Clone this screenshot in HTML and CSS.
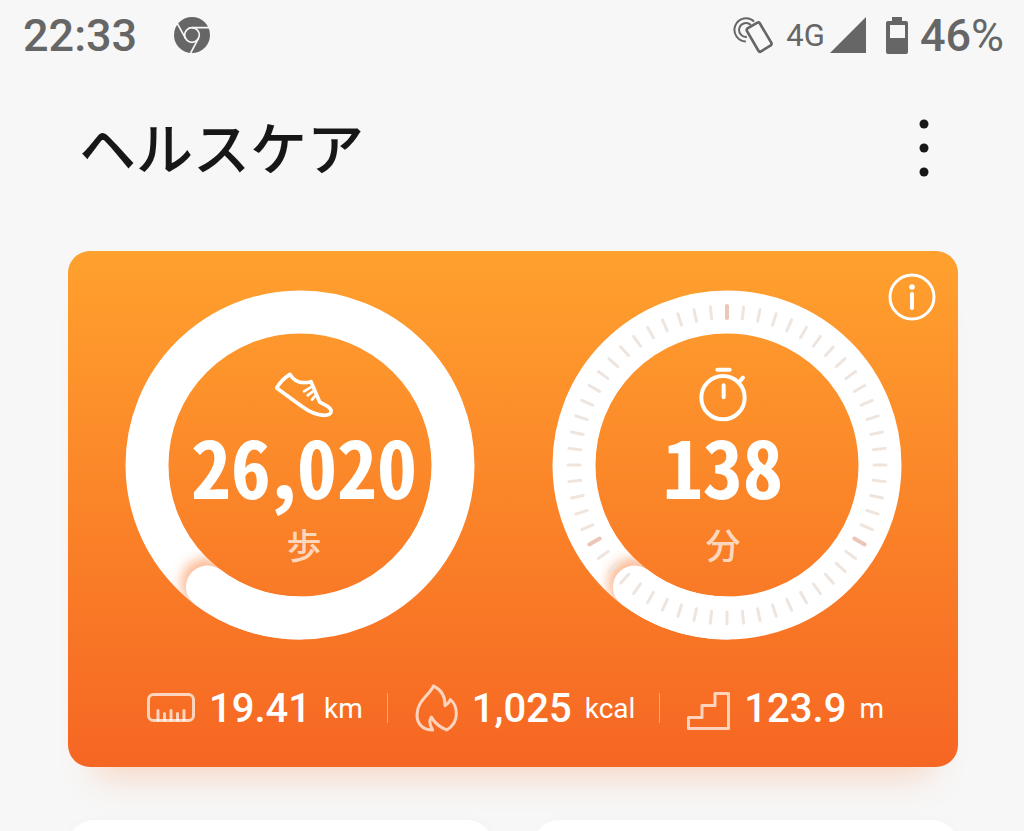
FILE: index.html
```html
<!DOCTYPE html>
<html lang="ja">

<head>
    <meta charset="UTF-8">
    <meta name="viewport" content="width=device-width, initial-scale=1.0">
    <title>ヘルスケア</title>
    <link rel="stylesheet" href="styles.css">
</head>

<body>

    <div class="status-bar">
        <div class="status-left">
            <span class="clock">22:33</span>
            <svg class="chrome" viewBox="0 0 108 108" width="36" height="36">
                <circle cx="54" cy="54" r="54" fill="#666" />
                <g fill="none" stroke="#f7f7f7" stroke-width="5">
                    <circle cx="54" cy="54" r="22" />
                    <path d="M54 32h52M35 65L10 20M73 65L50 108" />
                </g>
            </svg>
        </div>
        <div class="status-right">
            <svg viewBox="104 44 124 116" width="41" height="39" fill="none" stroke="#666" stroke-width="6">
                <path d="M168 60A35 35 0 1 0 143 120M158 70A21 21 0 1 0 146 106" />
                <path d="M149 80L178 63Q182 61 185 65L220 124Q222 129 218 132L189 150Q184 153 181 148L146 88Q144 83 149 80Z" stroke-width="8" />
            </svg>
            <span class="network">4G</span>
            <svg class="signal" viewBox="0 0 36 36" width="36" height="36">
                <path d="M36 0V36H0Z" fill="#666" />
            </svg>
            <svg class="battery" viewBox="0 0 22 37" width="22" height="37">
                <path fill="#666" fill-rule="evenodd" d="M6 0h10v4h4q2 0 2 2v29q0 2-2 2H2q-2 0-2-2V6q0-2 2-2h4ZM4 8v13h15V8Z" />
            </svg>
            <span class="percent">46<span class="sign">%</span></span>
        </div>
    </div>

    <header>
        <h1>ヘルスケア</h1>
        <button type="button" class="menu" aria-label="メニュー">
            <svg viewBox="0 0 10 58" width="10" height="58" fill="#171717">
                <circle cx="5" cy="5" r="4.5" />
                <circle cx="5" cy="29" r="4.5" />
                <circle cx="5" cy="53" r="4.5" />
            </svg>
        </button>
    </header>

    <main>
        <section class="card">
            <button type="button" class="info" aria-label="情報">
                <svg viewBox="0 0 48 48" width="48" height="48" fill="none" stroke="#fff" stroke-width="3">
                    <circle cx="24" cy="24" r="22" />
                    <path d="M24 21V35" stroke-width="4" stroke-linecap="round" />
                    <circle cx="24" cy="14" r="2.8" fill="#fff" stroke="none" />
                </svg>
            </button>

            <div class="rings">
                <div class="ring steps">
                    <svg class="dial" viewBox="0 0 350 350">
                        <defs>
                            <filter id="soft" x="-50%" y="-50%" width="200%" height="200%">
                                <feGaussianBlur stdDeviation="6" />
                            </filter>
                            <clipPath id="band">
                                <path clip-rule="evenodd" d="M175 .5a174.500 174.500 0 1 0 .01 0ZM175 43.500a131.500 131.500 0 1 0 .01 0Z" />
                            </clipPath>
                        </defs>
                        <circle class="track" cx="175" cy="175" r="153" />
                        <g clip-path="url(#band)">
                            <circle cx="81" cy="293" r="25" fill="#fcbb97" filter="url(#soft)" />
                        </g>
                        <path class="head" d="M175 328A153 153 0 0 1 82.500 297" />
                    </svg>
                    <div class="reading">
                        <div class="icon">
                            <svg viewBox="490 275 186 144" width="62" height="48" fill="none" stroke="#fff" stroke-width="11" stroke-linecap="round" stroke-linejoin="round">
                                <path d="M541 288Q514 305 501 329L576 384Q613 411 644 411C667 411 669 396 657 387C645 378 639 377 630 371L604 310Q561 322 541 288Z" />
                                <path d="M603 327L583 339M609 340L594 351M615 354L607 364" stroke-width="8" />
                            </svg>
                        </div>
                        <span class="number">26<span class="comma">,</span>020</span>
                        <span class="label">歩</span>
                    </div>
                </div>

                <div class="ring minutes">
                    <svg class="dial" viewBox="0 0 350 350">
                        <circle class="track" cx="175" cy="175" r="153" />
                        <g clip-path="url(#band)">
                            <circle cx="81" cy="293" r="25" fill="#fcbb97" filter="url(#soft)" />
                        </g>
                        <path class="head" d="M175 328A153 153 0 0 1 82.500 297" />
                        <g id="ticks"></g>
                    </svg>
                    <div class="reading">
                        <div class="icon">
                            <svg viewBox="472 264 156 168" width="52" height="56" fill="none" stroke="#fff" stroke-width="12" stroke-linecap="round">
                                <circle cx="550" cy="359" r="65" />
                                <path d="M533 275H570M597 314L610 299M552 322V358" />
                            </svg>
                        </div>
                        <span class="number">138</span>
                        <span class="label">分</span>
                    </div>
                </div>
            </div>

            <div class="stats">
                <div class="stat">
                    <svg viewBox="0 0 48 30" width="48" height="30">
                        <rect x="1.500" y="1.500" width="45" height="26" rx="5" />
                        <path d="M11 27V17.500M17.500 27V20.500M24 27V17.500M30.500 27V20.500M37 27V17.500" />
                    </svg>
                    <span class="value">19.41</span>
                    <span class="unit">km</span>
                </div>
                <div class="stat">
                    <svg viewBox="0 0 43 48" width="43" height="48">
                        <path transform="translate(-22 -12.700) scale(.3333)" stroke-width="9" d="M121 44C114 67 72 88 72 130C72 160 92 176 119 176C109 160 107 149 115 137C124 154 142 168 161 176C178 166 190 150 190 128C190 109 184 94 172 85C169 94 164 98 156 103C157 75 146 56 121 44Z" />
                    </svg>
                    <span class="value">1,025</span>
                    <span class="unit">kcal</span>
                </div>
                <div class="stat">
                    <svg viewBox="0 0 43 44" width="43" height="44">
                        <path d="M1.500 42.500V31.500H15V19.500H28V7.500H41.500V42.500Z" />
                    </svg>
                    <span class="value">123.9</span>
                    <span class="unit">m</span>
                </div>
            </div>
        </section>

        <div class="tiles">
            <section class="tile"></section>
            <section class="tile"></section>
        </div>
    </main>

    <script>
        // 60 marks round the minutes dial, a darker one every 20
        var ticks = document.getElementById('ticks');

        for (var i = 0; i < 60; i++) {
            var tick = document.createElementNS('http://www.w3.org/2000/svg', 'line');
            tick.setAttribute('x1', 175);
            tick.setAttribute('x2', 175);
            tick.setAttribute('y1', 16);
            tick.setAttribute('y2', 28);
            tick.setAttribute('transform', 'rotate(' + i * 6 + ' 175 175)');
            tick.setAttribute('class', i % 20 === 0 ? 'tick major' : 'tick');
            ticks.appendChild(tick);
        }
    </script>

</body>

</html>
```

FILE: styles.css
```css
* {
    box-sizing: border-box;
}

body {
    margin: 0;
    height: 100vh;
    overflow: hidden;
    background-color: #f7f7f7;
    font-family: Roboto, "Noto Sans CJK JP", sans-serif;
}

svg {
    display: block;
    flex-shrink: 0;
}

button {
    padding: 0;
    border: none;
    background: none;
    cursor: pointer;
}

.status-bar {
    display: flex;
    justify-content: space-between;
    align-items: center;
    height: 70px;
    padding: 0 20px 0 23px;
    color: #666;
    font-size: 45px;
    font-weight: 500;
}

.status-left,
.status-right {
    display: flex;
    align-items: center;
}

.chrome {
    margin-left: 37px;
}

.network {
    margin: 0 5px 0 12px;
    font-size: 31px;
    font-weight: 400;
}

.battery {
    margin: 0 12px 0 20px;
}

.sign {
    font-weight: 400;
}

header {
    display: flex;
    justify-content: space-between;
    align-items: center;
    height: 156px;
    padding: 0 95px 0 79px;
}

h1 {
    margin: 0 0 6px;
    color: #171717;
    font-family: "Noto Sans CJK JP", sans-serif;
    font-size: 57px;
    font-weight: 500;
    line-height: 80px;
}

main {
    padding: 25px 66px 0 68px;
}

.card {
    position: relative;
    padding: 39px 56px 29px 57px;
    border-radius: 22px;
    background: linear-gradient(#ffa12e, #f66623);
    box-shadow: 0 36px 32px -28px rgba(250, 130, 60, 0.3);
    color: #fff;
}

.info {
    position: absolute;
    top: 22px;
    right: 22px;
}

.rings {
    display: flex;
    justify-content: space-between;
}

.ring {
    display: grid;
    width: 350px;
}

.dial,
.reading {
    grid-area: 1 / 1;
}

.track,
.head {
    fill: none;
    stroke: #fff;
    stroke-width: 43px;
    stroke-linecap: round;
}

.tick {
    stroke: #efe5df;
    stroke-width: 3px;
    stroke-linecap: round;
}

.major {
    stroke: #ecc6b8;
    stroke-width: 4px;
}

.reading {
    z-index: 1;
    display: flex;
    flex-direction: column;
    align-items: center;
    justify-content: center;
}

.steps .reading {
    padding-left: 8px;
}

.minutes .reading {
    padding-right: 8px;
}

.icon {
    display: flex;
    align-items: center;
    height: 56px;
}

/* half-width digits */
.number {
    margin: 2px 0 20px;
    font-family: "Noto Sans CJK JP", Roboto, sans-serif;
    font-feature-settings: "hwid";
    font-size: 80px;
    font-weight: 700;
    line-height: 80px;
}

.comma {
    font-feature-settings: normal;
}

.label {
    color: rgba(255, 255, 255, 0.7);
    font-family: "Noto Sans CJK JP", sans-serif;
    font-size: 35px;
    font-weight: 500;
    line-height: 40px;
}

.stats {
    display: flex;
    justify-content: center;
    margin-top: 38px;
}

.stat {
    position: relative;
    display: flex;
    align-items: center;
    height: 60px;
    padding: 0 24px 0 28px;
}

.stat + .stat::before {
    content: "";
    position: absolute;
    top: 15px;
    left: 0;
    width: 1px;
    height: 30px;
    background-color: rgba(255, 255, 255, 0.4);
}

.stat svg {
    fill: none;
    stroke: rgba(255, 255, 255, 0.7);
    stroke-width: 3px;
    stroke-linecap: round;
    stroke-linejoin: round;
}

.value {
    margin: 0 13px 0 14px;
    font-size: 40px;
    font-weight: 500;
}

.unit {
    font-size: 28px;
}

.tiles {
    display: flex;
    gap: 40px;
    margin-top: 53px;
}

.tile {
    flex: 1;
    height: 240px;
    border-radius: 26px;
    background-color: #fff;
    box-shadow: 0 0 16px rgba(0, 0, 0, 0.02);
}
```
